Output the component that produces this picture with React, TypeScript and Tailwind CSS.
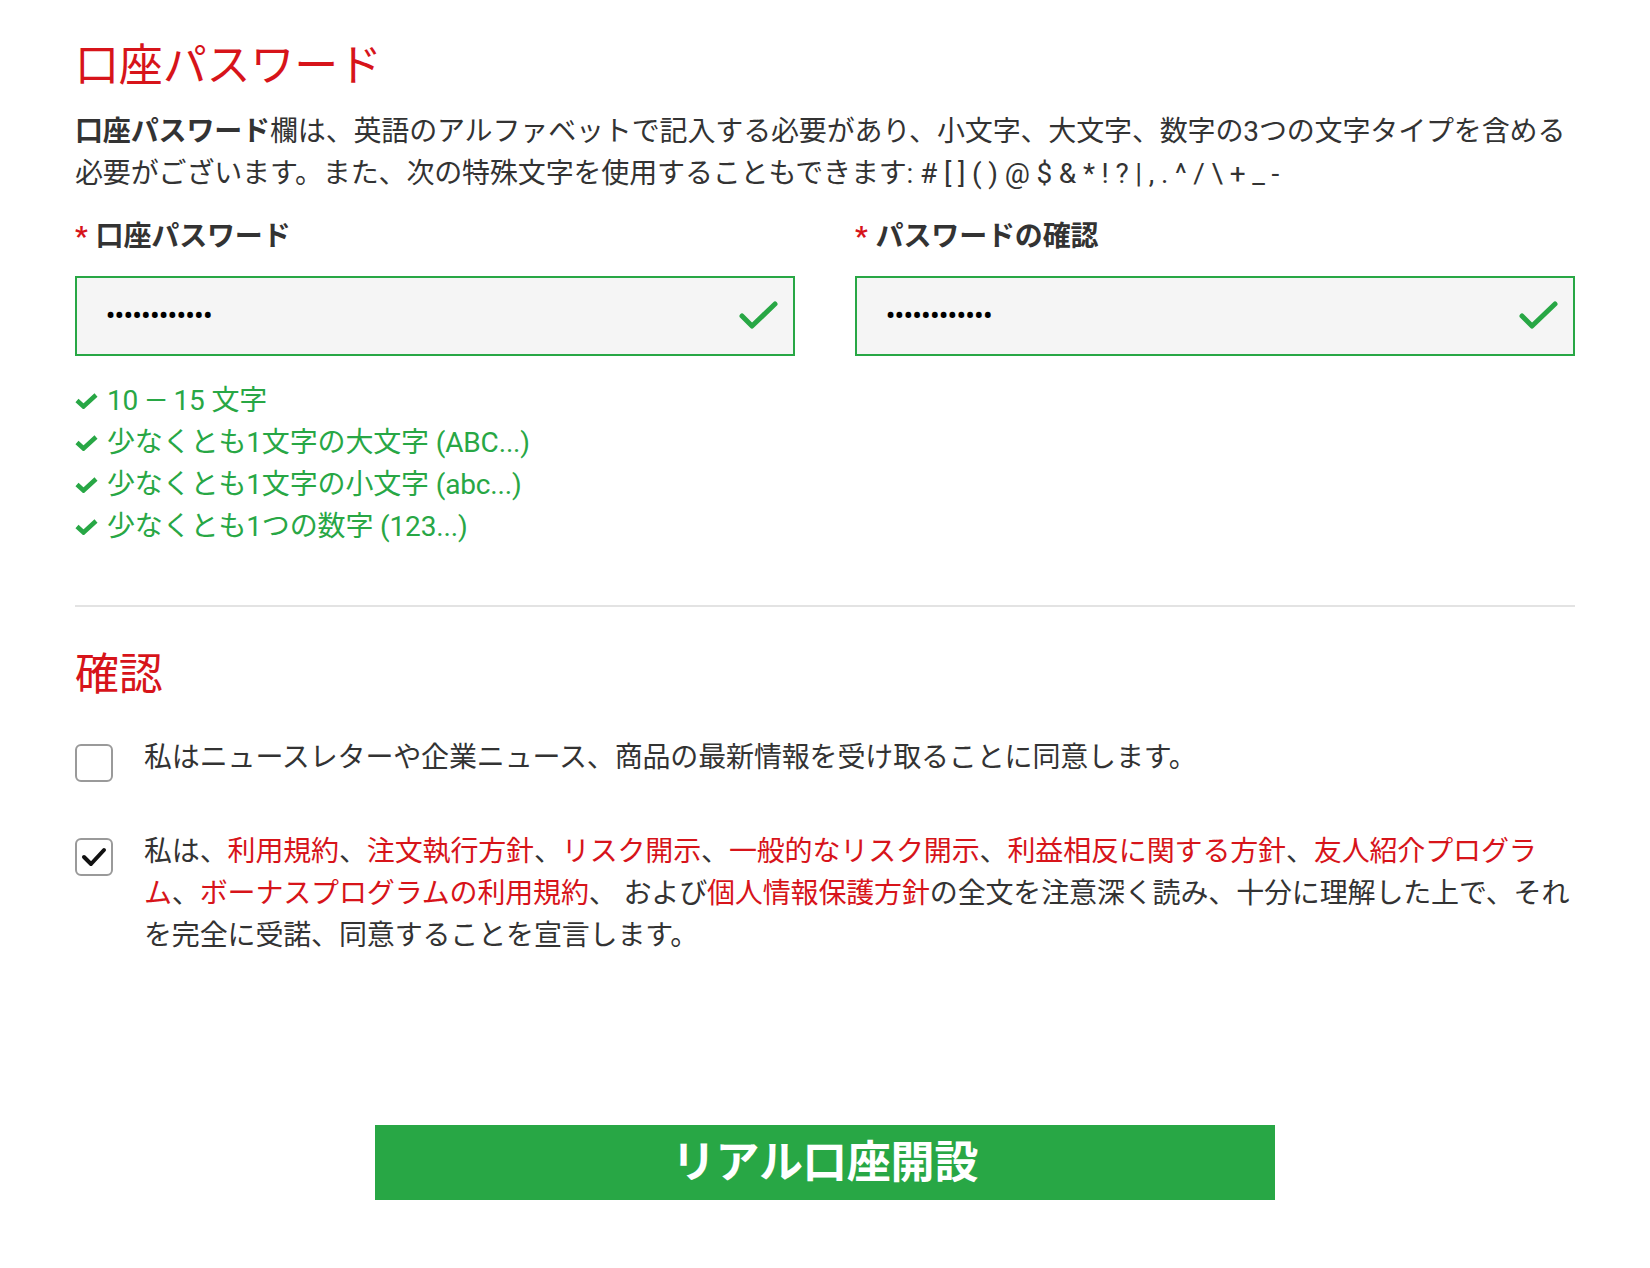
const font = { fontFamily: "Roboto, 'Noto Sans CJK JP', sans-serif" };

function InputCheck() {
  return (
    <svg width="40" height="30" viewBox="0 0 40 30" className="shrink-0">
      <polyline points="3,15 13,25 36,3" fill="none" stroke="#28a745" strokeWidth="5" strokeLinecap="round" strokeLinejoin="round" />
    </svg>
  );
}

function SmallCheck() {
  return (
    <svg width="23" height="16" viewBox="0 0 23 16" className="shrink-0">
      <polyline points="2,7.5 8.5,13.5 21,2" fill="none" stroke="#28a745" strokeWidth="4.5" strokeLinejoin="miter" />
    </svg>
  );
}

function Checkbox({ checked }: { checked?: boolean }) {
  return (
    <div className="mt-[7px] flex h-[38px] w-[38px] shrink-0 items-center justify-center rounded-[6px] border-2 border-[#9a9a9a] bg-white">
      {checked && (
        <svg width="26" height="22" viewBox="0 0 26 22">
          <polyline points="3,11 10,18 23,4" fill="none" stroke="#111" strokeWidth="4" strokeLinecap="round" strokeLinejoin="round" />
        </svg>
      )}
    </div>
  );
}

function PasswordField({ label }: { label: string }) {
  return (
    <div className="flex flex-col">
      <label className="mb-[18px] text-[28px] font-bold leading-[42px] text-[#333]">
        <span className="mr-2 text-[#d7141a]">*</span>
        {label}
      </label>
      <div className="flex h-[80px] items-center justify-between border-2 border-[#28a745] bg-[#f5f5f5] pl-[29px] pr-[14px]">
        <span className="text-[25px] font-bold text-black">••••••••••••</span>
        <InputCheck />
      </div>
    </div>
  );
}

const rules = ['10 — 15 文字', '少なくとも1文字の大文字 (ABC...)', '少なくとも1文字の小文字 (abc...)', '少なくとも1つの数字 (123...)'];

export default function App() {
  const red = 'text-[#d7141a]';
  return (
    <div className="min-h-screen bg-white text-[#333] tracking-[-0.15px]" style={font}>
      <div className="mx-auto w-[1500px] pt-[38px] pb-[67px]">
        {/* Password */}
        <h2 className={`text-[44px] font-normal leading-[56px] ${red}`}>口座パスワード</h2>
        <p className="mt-[17px] text-[28px] leading-[42px] text-[#333]">
          <b>口座パスワード</b>欄は、英語のアルファベットで記入する必要があり、小文字、大文字、数字の3つの文字タイプを含める必要がございます。また、次の特殊文字を使用することもできます: # [ ] ( ) @ $ &amp; * ! ? | , . ^ / \ + _ -
        </p>

        <div className="mt-[21px] grid grid-cols-2 gap-x-[60px]">
          <PasswordField label="口座パスワード" />
          <PasswordField label="パスワードの確認" />
        </div>

        <ul className="mt-[24px] flex flex-col text-[28px] leading-[42px] text-[#28a745]">
          {rules.map((r) => (
            <li key={r} className="flex items-center gap-[9px]">
              <SmallCheck />
              <span>{r}</span>
            </li>
          ))}
        </ul>

        <hr className="mt-[57px] border-t-2 border-[#e3e3e3]" />

        {/* Confirmation */}
        <h2 className={`mt-[40px] text-[44px] font-normal leading-[56px] ${red}`}>確認</h2>

        <div className="mt-[34px] flex gap-[31px]">
          <Checkbox />
          <p className="text-[28px] leading-[42px]">私はニュースレターや企業ニュース、商品の最新情報を受け取ることに同意します。</p>
        </div>

        <div className="mt-[49px] flex gap-[31px]">
          <Checkbox checked />
          <p className="text-[28px] leading-[42px]">
            私は、<span className={red}>利用規約</span>、<span className={red}>注文執行方針</span>、<span className={red}>リスク開示</span>、<span className={red}>一般的なリスク開示</span>、<span className={red}>利益相反に関する方針</span>、<span className={red}>友人紹介プログラム</span>、<span className={red}>ボーナスプログラムの利用規約</span>、 および<span className={red}>個人情報保護方針</span>の全文を注意深く読み、十分に理解した上で、それを完全に受諾、同意することを宣言します。
          </p>
        </div>

        <div className="mt-[168px] flex justify-center">
          <button className="flex h-[75px] w-[900px] items-center justify-center bg-[#28a745] text-[44px] font-bold text-white">
            リアル口座開設
          </button>
        </div>
      </div>
    </div>
  );
}
